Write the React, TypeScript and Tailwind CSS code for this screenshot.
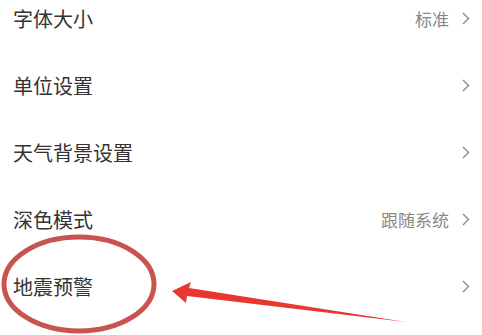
import React from "react";

const rows = [
  { label: "字体大小", value: "标准" },
  { label: "单位设置", value: "" },
  { label: "天气背景设置", value: "" },
  { label: "深色模式", value: "跟随系统" },
  { label: "地震预警", value: "" },
];

function Chevron() {
  return (
    <svg width="8" height="13" viewBox="0 0 8 13" fill="none">
      <path d="M1 1 L6.5 6.5 L1 12" stroke="#8a8a8a" strokeWidth="1.4" />
    </svg>
  );
}

export default function App() {
  return (
    <div
      className="relative w-[482px] h-[335px] overflow-hidden bg-white"
      style={{ fontFamily: '"Noto Sans CJK SC", "Noto Sans", sans-serif' }}
    >
      <div className="flex flex-col mt-[-15px]">
        {rows.map((row) => (
          <div
            key={row.label}
            className="flex h-[67px] items-center justify-between pl-[13px] pr-[12px]"
          >
            <span className="text-[20px] text-[#333333]">{row.label}</span>
            <div className="flex items-center gap-[13px]">
              {row.value && (
                <span className="text-[17px] text-[#888888]">{row.value}</span>
              )}
              <Chevron />
            </div>
          </div>
        ))}
      </div>

      <svg
        className="absolute left-0 top-0"
        width="482"
        height="335"
        viewBox="0 0 482 335"
      >
        <ellipse
          cx="79"
          cy="284"
          rx="75"
          ry="47"
          fill="none"
          stroke="#c9544e"
          strokeWidth="5"
        />
        <polygon
          points="172,291 191,282 189,288 406,322 187,296 186,303"
          fill="#e8372e"
        />
      </svg>
    </div>
  );
}
